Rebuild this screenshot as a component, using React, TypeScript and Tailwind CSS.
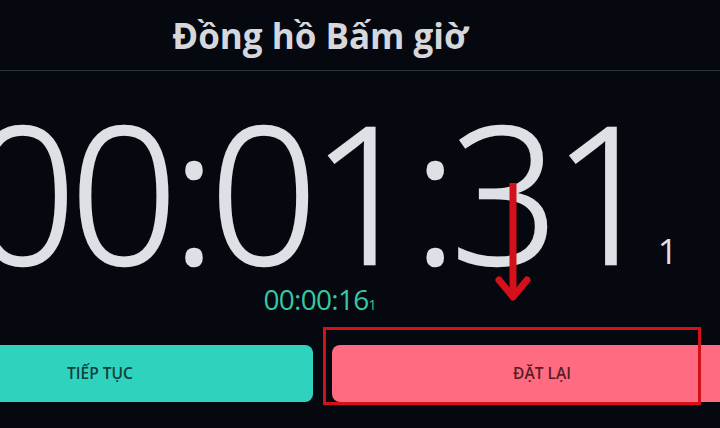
import React from "react";

const font = { fontFamily: '"Open Sans", "Noto Sans", sans-serif' };

function App() {
  return (
    <main
      style={font}
      className="relative w-[720px] h-[428px] overflow-hidden bg-[#05080f]"
    >
      <header className="h-[71px] border-b border-[#30343d] flex justify-center">
        <div className="w-[880px] shrink-0 -ml-[80px] flex items-center justify-center">
          <h1 className="text-[35px] font-bold text-[#d5d7dd] leading-none">Đồng hồ Bấm giờ</h1>
        </div>
      </header>

      <section className="flex justify-center">
        <div className="w-[880px] shrink-0 -ml-[80px] flex flex-col items-center">
          <div className="mt-[25px] ml-[6px] flex items-baseline whitespace-nowrap text-[#dfe0e5]">
            <span className="text-[190px] font-light leading-none tracking-[-7px] [-webkit-text-stroke:2.5px_#dfe0e5]">00:01:31</span>
            <span className="text-[35px] font-normal leading-none ml-[4px]">1</span>
          </div>
          <div className="-mt-[1px] flex items-baseline whitespace-nowrap text-[#38c7a3]">
            <span className="text-[28px] leading-none tracking-[-0.7px]">00:00:16</span>
            <span className="text-[14px] leading-none">1</span>
          </div>
        </div>
      </section>

      <div className="mt-[32px] -ml-[113px] flex gap-[19px]">
        <button className="w-[426px] h-[57px] shrink-0 rounded-lg bg-[#2fd3bd] text-[#123f3c] text-[15.5px] font-semibold">
          TIẾP TỤC
        </button>
        <button className="w-[420px] h-[57px] shrink-0 rounded-lg bg-[#ff6b80] text-[#5b1b26] text-[15.5px] font-semibold">
          ĐẶT LẠI
        </button>
      </div>

      {/* red annotation */}
      <div className="absolute left-[323px] top-[327px] w-[378px] h-[78px] border-[3px] border-[#d4101b]" />
      <svg className="absolute left-[490px] top-[180px]" width="46" height="126" viewBox="0 0 46 126">
        <line x1="23" y1="3" x2="23" y2="116" stroke="#d4101b" strokeWidth="7" />
        <polyline points="9,100 23,117 37,100" fill="none" stroke="#d4101b" strokeWidth="7" strokeLinecap="round" strokeLinejoin="round" />
      </svg>
    </main>
  );
}

export default App;
